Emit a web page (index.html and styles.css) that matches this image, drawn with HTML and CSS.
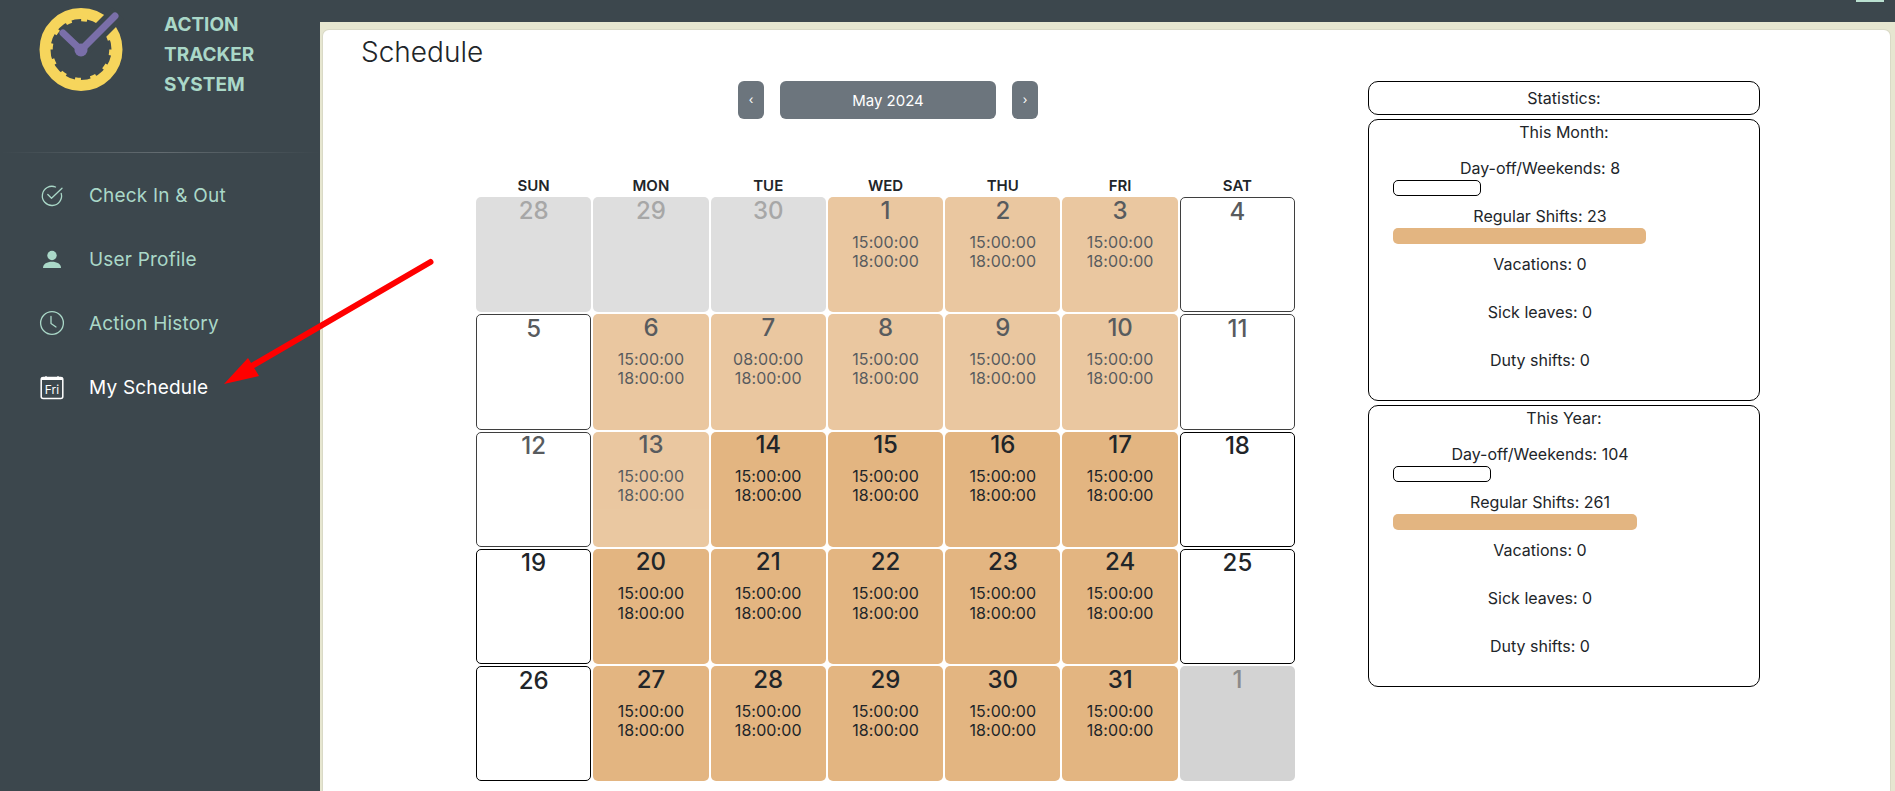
FILE: index.html
```html
<!DOCTYPE html>
<html lang="en">
<head>
    <meta charset="UTF-8">
    <meta name="viewport" content="width=device-width, initial-scale=1.0">
    <title>Action Tracker System - My Schedule</title>
    <link rel="stylesheet" href="styles.css">
</head>
<body>
    <aside class="sidebar">
        <div class="brand">
            <svg class="brand-logo" width="100" height="100" viewBox="30 0 100 100">
                <circle cx="81" cy="49.5" r="36" fill="none" stroke="#f6d55c" stroke-width="11"/>
                <circle cx="81" cy="49.5" r="30" fill="none" stroke="#f6d55c" stroke-width="3.5" stroke-dasharray="6 9.7"/>
                <path d="M81 50 L118 13" stroke="#3c474d" stroke-width="17"/>
                <path d="M63 33 L81 50 L115 16" fill="none" stroke="#7a6fa9" stroke-width="7" stroke-linecap="round"/>
                <circle cx="81" cy="50" r="6.5" fill="#7a6fa9"/>
            </svg>
            <div class="brand-name">ACTION<br>TRACKER<br>SYSTEM</div>
        </div>
        <div class="sidebar-divider"></div>
        <nav class="nav-list">
            <a class="nav-item">
                <svg class="nav-icon" viewBox="0 0 26 26" fill="none" stroke="currentColor" stroke-width="1.3" stroke-linecap="round" stroke-linejoin="round">
                    <path d="M22.2 11.4 A9.6 9.6 0 1 1 16.5 5"/>
                    <path d="M8.8 12.5 L12.5 16.2 L23 6.2"/>
                </svg>
                Check In &amp; Out
            </a>
            <a class="nav-item">
                <svg class="nav-icon" viewBox="0 0 26 26" fill="currentColor">
                    <circle cx="13" cy="9.5" r="4.7"/>
                    <path d="M4 22 C4 18 8 15.8 13 15.8 C18 15.8 22 18 22 22 Z"/>
                </svg>
                User Profile
            </a>
            <a class="nav-item">
                <svg class="nav-icon" viewBox="0 0 26 26" fill="none" stroke="currentColor" stroke-width="1.3" stroke-linecap="round" stroke-linejoin="round">
                    <circle cx="13" cy="13" r="11.4"/>
                    <path d="M12 6.5 V13.5 L17 17"/>
                </svg>
                Action History
            </a>
            <a class="nav-item active">
                <svg class="nav-icon" viewBox="0 0 26 26" fill="none" stroke="currentColor" stroke-width="1.5" stroke-linejoin="round">
                    <rect x="2.2" y="3.4" width="21.6" height="21" rx="2"/>
                    <path d="M2.2 4.8 H23.8" stroke-width="2.4"/>
                    <path d="M7 2 V3.4 M19 2 V3.4" stroke-width="1.2"/>
                    <text class="nav-icon-day" x="13" y="19.5">Fri</text>
                </svg>
                My Schedule
            </a>
        </nav>
    </aside>

    <div class="main">
        <header class="topbar"><div class="topbar-icon"></div></header>
        <div class="content">
            <div class="card">
                <h3 class="page-title">Schedule</h3>
                <div class="schedule">
                    <section class="calendar">
                        <div class="month-nav">
                            <button class="nav-btn">&lsaquo;</button>
                            <button class="nav-btn month-btn">May 2024</button>
                            <button class="nav-btn">&rsaquo;</button>
                        </div>
                        <div class="weekdays">
                            <div>SUN</div><div>MON</div><div>TUE</div><div>WED</div><div>THU</div><div>FRI</div><div>SAT</div>
                        </div>
                        <div class="days">
                            <div class="day other past"><div class="day-num">28</div></div>
                            <div class="day other past"><div class="day-num">29</div></div>
                            <div class="day other past"><div class="day-num">30</div></div>
                            <div class="day shift past"><div class="day-num">1</div><div class="day-time">15:00:00<br>18:00:00</div></div>
                            <div class="day shift past"><div class="day-num">2</div><div class="day-time">15:00:00<br>18:00:00</div></div>
                            <div class="day shift past"><div class="day-num">3</div><div class="day-time">15:00:00<br>18:00:00</div></div>
                            <div class="day off past"><div class="day-num">4</div></div>

                            <div class="day off past"><div class="day-num">5</div></div>
                            <div class="day shift past"><div class="day-num">6</div><div class="day-time">15:00:00<br>18:00:00</div></div>
                            <div class="day shift past"><div class="day-num">7</div><div class="day-time">08:00:00<br>18:00:00</div></div>
                            <div class="day shift past"><div class="day-num">8</div><div class="day-time">15:00:00<br>18:00:00</div></div>
                            <div class="day shift past"><div class="day-num">9</div><div class="day-time">15:00:00<br>18:00:00</div></div>
                            <div class="day shift past"><div class="day-num">10</div><div class="day-time">15:00:00<br>18:00:00</div></div>
                            <div class="day off past"><div class="day-num">11</div></div>

                            <div class="day off past"><div class="day-num">12</div></div>
                            <div class="day shift past"><div class="day-num">13</div><div class="day-time">15:00:00<br>18:00:00</div></div>
                            <div class="day shift"><div class="day-num">14</div><div class="day-time">15:00:00<br>18:00:00</div></div>
                            <div class="day shift"><div class="day-num">15</div><div class="day-time">15:00:00<br>18:00:00</div></div>
                            <div class="day shift"><div class="day-num">16</div><div class="day-time">15:00:00<br>18:00:00</div></div>
                            <div class="day shift"><div class="day-num">17</div><div class="day-time">15:00:00<br>18:00:00</div></div>
                            <div class="day off"><div class="day-num">18</div></div>

                            <div class="day off"><div class="day-num">19</div></div>
                            <div class="day shift"><div class="day-num">20</div><div class="day-time">15:00:00<br>18:00:00</div></div>
                            <div class="day shift"><div class="day-num">21</div><div class="day-time">15:00:00<br>18:00:00</div></div>
                            <div class="day shift"><div class="day-num">22</div><div class="day-time">15:00:00<br>18:00:00</div></div>
                            <div class="day shift"><div class="day-num">23</div><div class="day-time">15:00:00<br>18:00:00</div></div>
                            <div class="day shift"><div class="day-num">24</div><div class="day-time">15:00:00<br>18:00:00</div></div>
                            <div class="day off"><div class="day-num">25</div></div>

                            <div class="day off"><div class="day-num">26</div></div>
                            <div class="day shift"><div class="day-num">27</div><div class="day-time">15:00:00<br>18:00:00</div></div>
                            <div class="day shift"><div class="day-num">28</div><div class="day-time">15:00:00<br>18:00:00</div></div>
                            <div class="day shift"><div class="day-num">29</div><div class="day-time">15:00:00<br>18:00:00</div></div>
                            <div class="day shift"><div class="day-num">30</div><div class="day-time">15:00:00<br>18:00:00</div></div>
                            <div class="day shift"><div class="day-num">31</div><div class="day-time">15:00:00<br>18:00:00</div></div>
                            <div class="day other"><div class="day-num">1</div></div>
                        </div>
                    </section>

                    <section class="stats">
                        <div class="stats-box stats-head">Statistics:</div>
                        <div class="stats-box">
                            <div class="stats-title">This Month:</div>
                            <div class="stat-row">
                                <div class="stat-label">Day-off/Weekends: 8</div>
                                <div class="stat-bar empty" style="width: 30%"></div>
                            </div>
                            <div class="stat-row">
                                <div class="stat-label">Regular Shifts: 23</div>
                                <div class="stat-bar" style="width: 86%"></div>
                            </div>
                            <div class="stat-row">
                                <div class="stat-label">Vacations: 0</div>
                            </div>
                            <div class="stat-row">
                                <div class="stat-label">Sick leaves: 0</div>
                            </div>
                            <div class="stat-row">
                                <div class="stat-label">Duty shifts: 0</div>
                            </div>
                        </div>
                        <div class="stats-box">
                            <div class="stats-title">This Year:</div>
                            <div class="stat-row">
                                <div class="stat-label">Day-off/Weekends: 104</div>
                                <div class="stat-bar empty" style="width: 33.3%"></div>
                            </div>
                            <div class="stat-row">
                                <div class="stat-label">Regular Shifts: 261</div>
                                <div class="stat-bar" style="width: 83%"></div>
                            </div>
                            <div class="stat-row">
                                <div class="stat-label">Vacations: 0</div>
                            </div>
                            <div class="stat-row">
                                <div class="stat-label">Sick leaves: 0</div>
                            </div>
                            <div class="stat-row">
                                <div class="stat-label">Duty shifts: 0</div>
                            </div>
                        </div>
                    </section>
                </div>
            </div>
        </div>
    </div>

    <!-- annotation drawn over the screenshot -->
    <svg class="arrow" width="1895" height="791">
        <path d="M430.5 262 L245 370" stroke="#ff0000" stroke-width="6" stroke-linecap="round" fill="none"/>
        <path d="M224 384 L248 358 L259 376 Z" fill="#ff0000"/>
    </svg>
</body>
</html>
```

FILE: styles.css
```css
:root {
    --sidebar-color: #3c474d;
    --mint-color: #aad8c8;
    --beige-color: #e6e6d0;
    --shift-color: #e3b581;
    --text-color: #212529;
}

html, body {
    height: 100%;
}

body {
    font-family: 'Inter', 'Liberation Sans', sans-serif;
    margin: 0;
    display: flex;
    overflow: hidden;
    color: var(--text-color);
    background-color: var(--beige-color);
}

.sidebar {
    width: 320px;
    flex-shrink: 0;
    background: var(--sidebar-color);
}

.brand {
    display: flex;
    height: 152px;
    box-sizing: border-box;
}

.brand-logo {
    margin-left: 30px;
    flex-shrink: 0;
}

.brand-name {
    margin: 10px 0 0 34px;
    font-size: 19px;
    font-weight: 700;
    line-height: 30px;
    color: var(--mint-color);
}

.sidebar-divider {
    height: 1px;
    background: linear-gradient(90deg, rgba(255, 255, 255, 0), rgba(255, 255, 255, 0.2), rgba(255, 255, 255, 0));
}

.nav-list {
    padding-top: 10px;
}

.nav-item {
    display: flex;
    align-items: center;
    height: 64px;
    padding-left: 39px;
    font-size: 19px;
    letter-spacing: 0.2px;
    color: var(--mint-color);
}

.nav-item.active {
    color: #fff;
}

.nav-icon {
    width: 26px;
    height: 26px;
    margin-right: 24px;
    flex-shrink: 0;
}

.nav-icon-day {
    font-size: 12px;
    letter-spacing: 0;
    fill: currentColor;
    stroke: none;
    text-anchor: middle;
}

.main {
    flex: 1;
    min-width: 0;
    display: flex;
    flex-direction: column;
}

.topbar {
    height: 22px;
    flex-shrink: 0;
    background: var(--sidebar-color);
    display: flex;
    justify-content: flex-end;
}

.topbar-icon {
    width: 28px;
    height: 2px;
    margin-right: 11px;
    background: #b9e0d0;
}

.content {
    flex: 1;
    display: flex;
    padding: 8px 5px 0 3px;
}

.card {
    flex: 1;
    background: #fff;
    border-radius: 6px 6px 0 0;
    box-shadow: 0 0 0 1px #d9d9c6;
    padding-top: 5px;
}

.page-title {
    margin: 0 0 12px 38px;
    font-size: 28px;
    font-weight: 300;
    line-height: 34px;
}

.schedule {
    display: flex;
    padding-left: 153px;
}

.calendar {
    width: 819px;
    flex-shrink: 0;
}

.month-nav {
    display: flex;
    justify-content: center;
    gap: 16px;
    margin: 0 0 57px 5px;
}

.nav-btn {
    width: 26px;
    height: 38px;
    padding: 0 0 2px;
    border: none;
    border-radius: 6px;
    background: #6c757d;
    color: #fff;
    font-family: inherit;
    font-size: 12px;
}

.month-btn {
    width: 216px;
    padding: 0;
    font-size: 15px;
}

.weekdays {
    display: grid;
    grid-template-columns: repeat(7, 1fr);
    gap: 2px;
    height: 20px;
    margin-bottom: 1px;
    font-size: 15px;
    font-weight: 600;
    line-height: 20px;
    text-align: center;
}

.days {
    display: grid;
    grid-template-columns: repeat(7, 1fr);
    gap: 2px;
}

.day {
    aspect-ratio: 1;
    box-sizing: border-box;
    border-radius: 5px;
    text-align: center;
}

.day.shift {
    background: var(--shift-color);
}

.day.off {
    border: 1px solid #000;
    background: #fff;
}

.day.other {
    background: #d3d3d3;
    color: #8a8a8a;
}

.day.past {
    opacity: 0.75;
}

.day-num {
    margin-top: -1.5px;
    font-size: 24px;
    font-weight: 500;
    line-height: 29px;
}

.day-time {
    margin-top: 8px;
    font-size: 16px;
    letter-spacing: 0.1px;
    line-height: 19.2px;
}

.stats {
    width: 392px;
    margin-left: 73px;
    font-size: 16px;
    line-height: 24px;
    text-align: center;
}

.stats-box {
    box-sizing: border-box;
    height: 282px;
    margin-bottom: 4px;
    padding: 0 24px;
    border: 1px solid #000;
    border-radius: 10px;
}

.stats-box.stats-head {
    height: 34px;
    line-height: 32px;
}

.stats-title {
    margin-bottom: 12px;
}

.stat-row {
    width: 294px;
    height: 40px;
    margin-bottom: 8px;
}

.stat-bar {
    box-sizing: border-box;
    height: 16px;
    border-radius: 5px;
    background: var(--shift-color);
}

.stat-bar.empty {
    border: 1px solid #000;
    background: #fff;
}

.arrow {
    position: absolute;
    top: 0;
    left: 0;
    pointer-events: none;
}
```
